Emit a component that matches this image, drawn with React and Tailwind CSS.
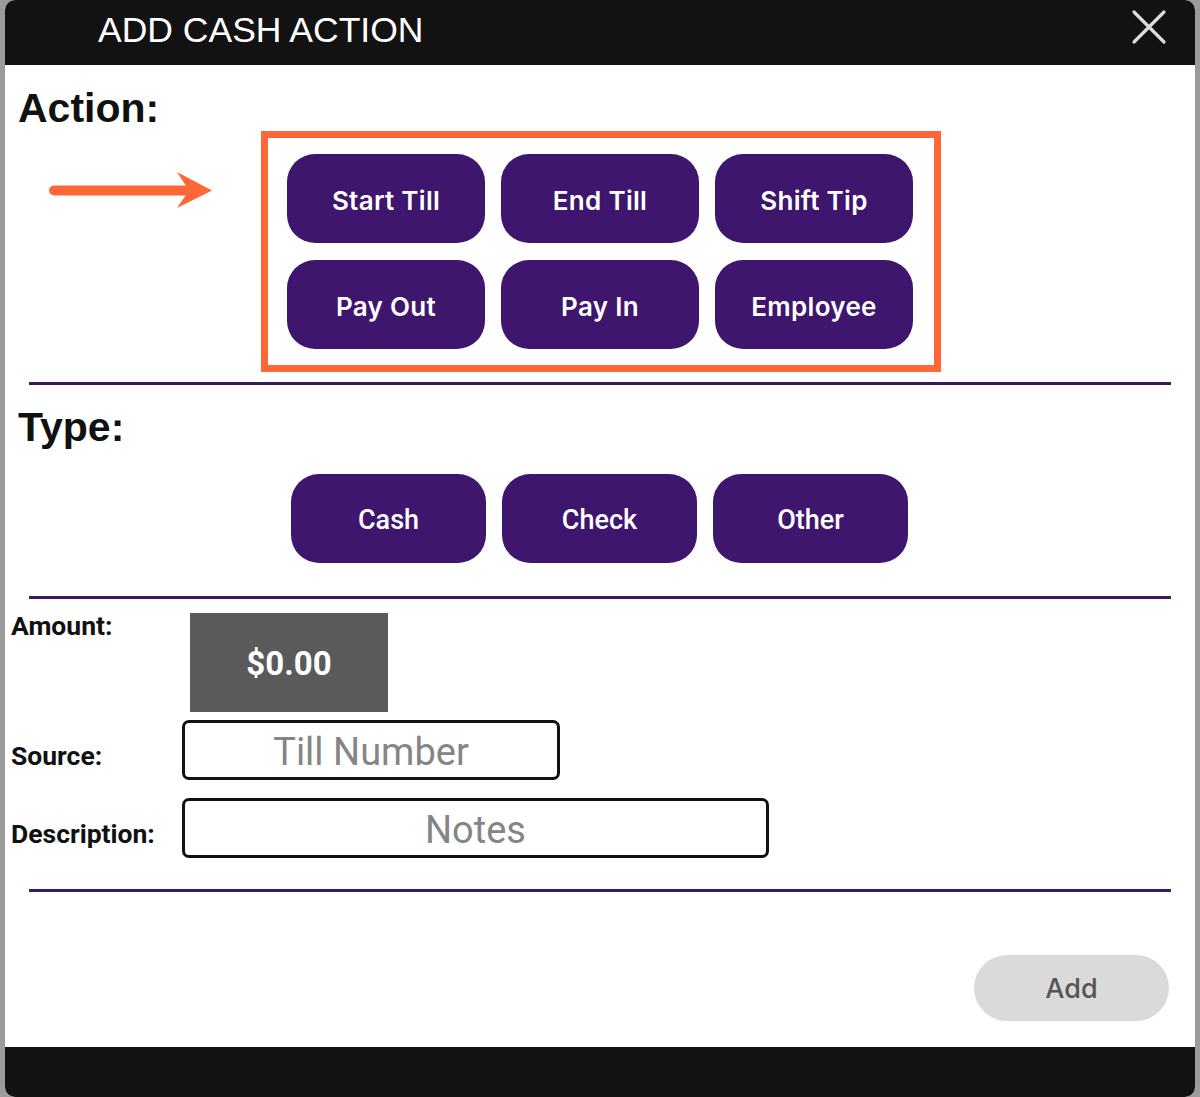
import React from "react";

function ActionBtn({ children }) {
  return (
    <div className="w-[198px] h-[89px] rounded-[28px] bg-[#3e166e] flex items-center justify-center pt-[4px] text-white text-[26px] tracking-[0.3px] font-semibold font-['Inter',sans-serif]">
      {children}
    </div>
  );
}

function TypeBtn({ children }) {
  return (
    <div className="w-[195px] h-[89px] rounded-[28px] bg-[#3e166e] flex items-center justify-center pt-[4px] text-white text-[27px] font-medium font-['Roboto',sans-serif]">
      {children}
    </div>
  );
}

function Divider({ className }) {
  return <div className={"mx-[24px] h-[3px] bg-[#3a1a5c] " + className} />;
}

export default function App() {
  return (
    <div className="w-[1200px] h-[1097px] bg-[#9b9b9b] px-[5px] overflow-hidden">
      <div className="h-full bg-white rounded-[10px] overflow-hidden flex flex-col">
        {/* Header */}
        <div className="h-[65px] bg-[#121212] flex items-start justify-between shrink-0">
          <div className="pl-[93px] pt-[13px] text-white text-[35.5px] leading-none font-['Liberation_Sans',Arial,sans-serif]">
            ADD CASH ACTION
          </div>
          <svg width="36" height="36" viewBox="0 0 36 36" className="mt-[9px] mr-[28px]">
            <path d="M3 3 L33 33 M33 3 L3 33" stroke="#dcdcdc" strokeWidth="3.2" strokeLinecap="round" />
          </svg>
        </div>

        {/* Content */}
        <div className="flex-1 flex flex-col">
          <div className="mt-[23px] pl-[13px] text-[41px] leading-none font-bold text-[#111] font-['Liberation_Sans',Arial,sans-serif]">
            Action:
          </div>
          <div className="mt-[2px] flex items-start">
            <svg width="170" height="38" viewBox="0 0 170 38" className="ml-[44px] mt-[41px]">
              <line x1="5" y1="18.5" x2="150" y2="18.5" stroke="#ff6836" strokeWidth="10" strokeLinecap="round" />
              <path d="M128 0 L163 18.5 L128 36 L140 18.5 Z" fill="#ff6836" />
            </svg>
            <div className="ml-[42px] w-[680px] h-[241px] border-[7px] border-[#ff6836] flex items-center justify-center">
              <div className="grid grid-cols-3 gap-x-[16px] gap-y-[17px] ml-[-2px]">
                <ActionBtn>Start Till</ActionBtn>
                <ActionBtn>End Till</ActionBtn>
                <ActionBtn>Shift Tip</ActionBtn>
                <ActionBtn>Pay Out</ActionBtn>
                <ActionBtn>Pay In</ActionBtn>
                <ActionBtn>Employee</ActionBtn>
              </div>
            </div>
          </div>

          <Divider className="mt-[10px]" />

          <div className="mt-[22px] pl-[13px] text-[41px] leading-none font-bold text-[#111] font-['Liberation_Sans',Arial,sans-serif]">
            Type:
          </div>
          <div className="mt-[26px] ml-[286px] flex gap-[16px]">
            <TypeBtn>Cash</TypeBtn>
            <TypeBtn>Check</TypeBtn>
            <TypeBtn>Other</TypeBtn>
          </div>

          <Divider className="mt-[33px]" />

          <div className="font-['Roboto',sans-serif]">
            <div className="mt-[14px] flex items-start">
              <div className="w-[177px] pl-[6px] text-[26.5px] leading-none font-bold text-[#111]">Amount:</div>
              <div className="ml-[8px] w-[198px] h-[99px] bg-[#5a5a5a] flex items-center justify-center pt-[2px] text-white text-[33px] font-bold">
                $0.00
              </div>
            </div>
            <div className="mt-[8px] flex items-start">
              <div className="w-[177px] pl-[6px] mt-[23px] text-[26.5px] leading-none font-bold text-[#111]">Source:</div>
              <div className="w-[378px] h-[60px] border-[3px] border-[#111] rounded-[7px] flex items-center justify-center pt-[4px] text-[38px] text-[#858585]">
                Till Number
              </div>
            </div>
            <div className="mt-[18px] flex items-start">
              <div className="w-[177px] pl-[6px] mt-[23px] text-[26.5px] leading-none font-bold text-[#111]">Description:</div>
              <div className="w-[587px] h-[60px] border-[3px] border-[#111] rounded-[7px] flex items-center justify-center pt-[4px] text-[38px] text-[#858585]">
                Notes
              </div>
            </div>
          </div>

          <Divider className="mt-[31px]" />

          <div className="mt-[63px] flex justify-end pr-[26px]">
            <div className="w-[195px] h-[66px] rounded-full bg-[#dbdada] flex items-center justify-center pt-[3px] text-[27px] font-medium text-[#555] font-['Inter',sans-serif]">
              Add
            </div>
          </div>
        </div>

        {/* Footer */}
        <div className="h-[50px] bg-[#121212] shrink-0" />
      </div>
    </div>
  );
}
